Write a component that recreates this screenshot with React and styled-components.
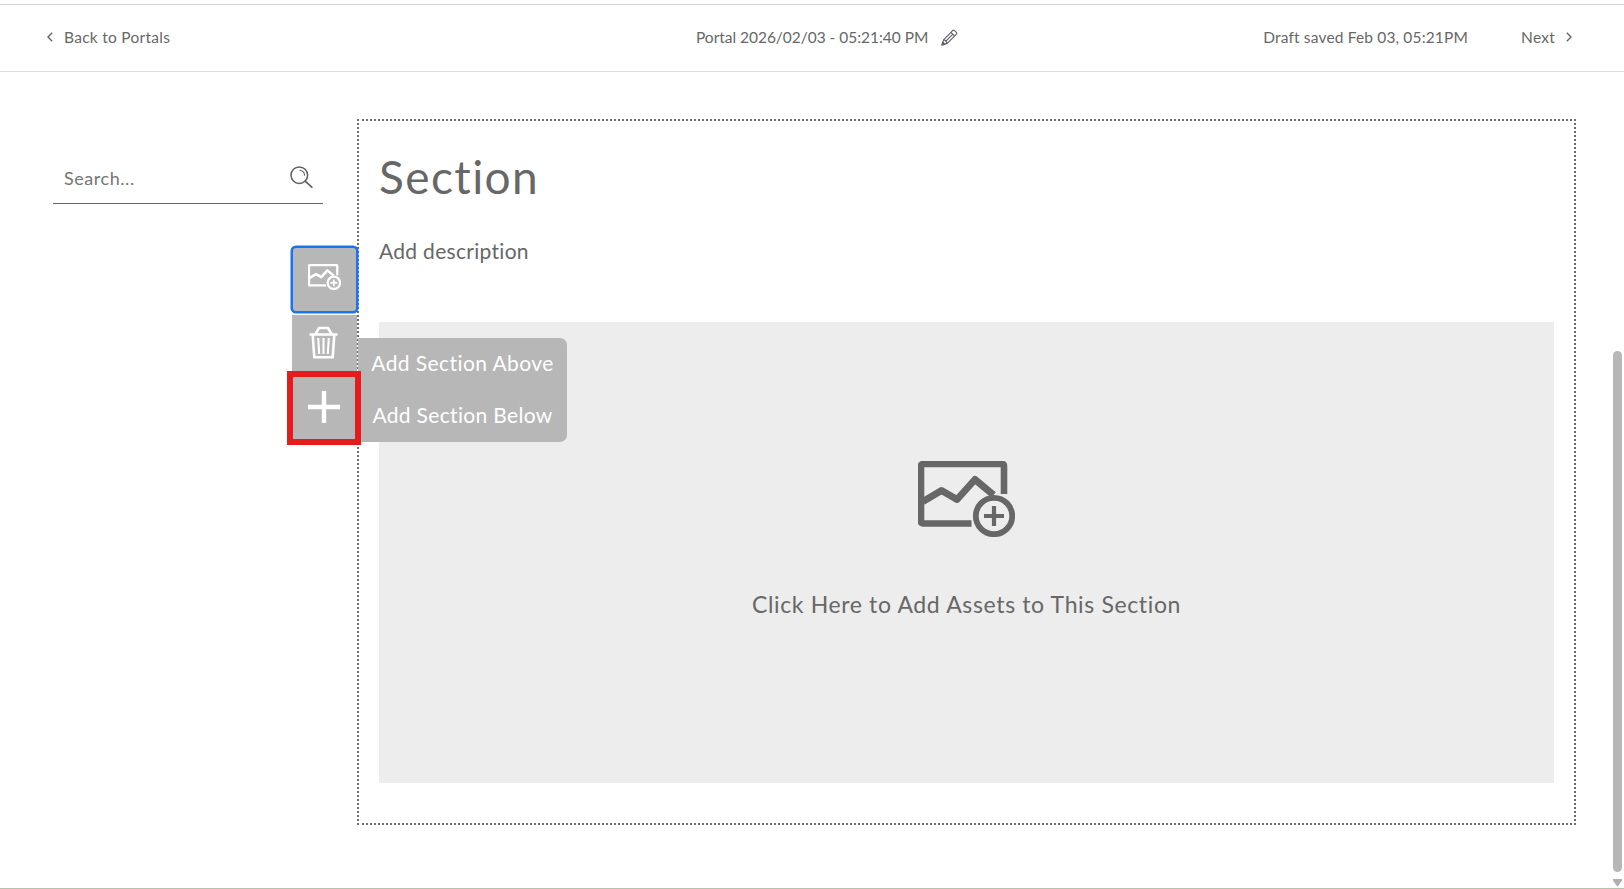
import React from "react";
import styled, { createGlobalStyle } from "styled-components";

const INK = "#676767";

const GlobalStyle = createGlobalStyle`
  *, *::before, *::after { box-sizing: border-box; }
  html, body { margin: 0; background: #fff; overflow: hidden; }
  body {
    font-family: Lato, "Liberation Sans", sans-serif;
    font-variant-ligatures: none;
    color: ${INK};
  }
  button { font: inherit; font-variant-ligatures: none; color: inherit; border: 0; background: none; padding: 0; }
  svg { display: block; flex: none; }
`;

const Page = styled.div`
  width: 100%;
  height: 889px;
  padding-top: 4px;
  display: flex;
  flex-direction: column;
  border-bottom: 1px solid #b3c4a8;
`;

const Text = styled.span`
  font-size: ${(p) => p.$size}px;
  line-height: ${(p) => p.$line || 20}px;
  letter-spacing: ${(p) => p.$track || 0}px;
  white-space: nowrap;
`;

const Header = styled.header`
  flex: none;
  height: 68px;
  padding: 0 52px 2px 47px;
  display: grid;
  grid-template-columns: 649px 1fr auto;
  align-items: center;
  border-top: 1px solid #d0d0d0;
  border-bottom: 1px solid #dfdfdf;
`;

const BackLink = styled.button`
  display: flex;
  align-items: center;
  gap: 11px;
`;

const PortalTitle = styled.div`
  display: flex;
  align-items: center;
  gap: 13px;
`;

const HeaderActions = styled.div`
  display: flex;
  align-items: center;
  gap: 53px;
`;

const NextButton = styled.button`
  display: flex;
  align-items: center;
  gap: 11px;
`;

const Main = styled.main`
  flex: 1;
  display: flex;
  min-height: 0;
`;

const Sidebar = styled.aside`
  width: 357px;
  flex: none;
  padding: 85px 34px 0 53px;
`;

const SearchField = styled.label`
  height: 47px;
  padding: 0 10px 5px 11px;
  display: flex;
  align-items: center;
  justify-content: space-between;
  border-bottom: 1px solid ${INK};
`;

const SearchInput = styled(Text)`
  color: #757575;
  padding-top: 1px;
`;

const SectionCard = styled.section`
  position: relative;
  width: 1219px;
  height: 706px;
  flex: none;
  margin-top: 47px;
  padding: 28px 20px 0;
  border: 2px dotted #6b6b6b;
  display: flex;
  flex-direction: column;
`;

const SectionTitle = styled(Text).attrs({ as: "h1" })`
  margin: 0;
  font-weight: 400;
`;

const Description = styled(Text).attrs({ as: "p" })`
  margin: 33px 0 58px;
`;

const DropZone = styled.button`
  height: 461px;
  background: #ededed;
  display: flex;
  flex-direction: column;
  align-items: center;
  padding-top: 139px;
  gap: 53px;
`;

const Toolbar = styled.div`
  position: absolute;
  left: -68px;
  top: 125px;
  width: 67px;
  display: flex;
  flex-direction: column;
  align-items: center;
`;

const Tool = styled.button`
  width: 65px;
  height: 56px;
  background: #b7b7b7;
  color: #fff;
  display: flex;
  align-items: center;
  justify-content: center;
`;

const FocusedTool = styled(Tool)`
  width: 67px;
  height: 67px;
  margin-bottom: 2px;
  padding: 0 1px 5px 0;
  border: 2px solid #1a73f0;
  border-radius: 5px;
  box-shadow: 0 0 0 0.5px #1a73f0;
`;

const TrashTool = styled(Tool)`
  padding: 0 2px 1px 0;
`;

const HighlightedTool = styled(Tool)`
  width: 74px;
  height: 74px;
  margin-left: -1px;
  padding-bottom: 3px;
  border: 6px solid #e61b1b;
  position: relative;
  z-index: 2;
`;

const AddMenu = styled.div`
  position: absolute;
  left: -1px;
  top: 217px;
  width: 209px;
  height: 104px;
  padding-bottom: 1px;
  border-radius: 0 7px 7px 0;
  background: #b7b7b7;
  color: #fff;
  display: grid;
  grid-template-rows: 52px 52px;
  place-items: center;
  align-content: end;
`;

const ScrollTrack = styled.div`
  margin-left: auto;
  width: 11px;
  padding: 279px 2px 2px 0;
  display: flex;
  flex-direction: column;
  gap: 7px;
`;

const ScrollThumb = styled.div`
  height: 521px;
  border-radius: 5px;
  background: #b7b7b7;
`;

const Chevron = ({ right }) => (
  <svg width="6" height="10" viewBox="0 0 6 10" fill="none" stroke={INK} strokeWidth="1.4">
    <path d={right ? "M.8.8 5 5 .8 9.2" : "M5.2.8 1 5l4.2 4.2"} />
  </svg>
);

const Pencil = () => (
  <svg width="17" height="17" viewBox="0 0 17 17" fill="none" stroke="#5f5f6b" strokeWidth="1.1" strokeLinejoin="round">
    <path d="M1 16l1.6-5.2L11.6 1.6q1-1 2 0l1.7 1.7q1 1 0 2L6.2 14.4z" />
    <path d="M2.6 10.8q2.8.6 3.6 3.6M9.9 3.3l3.7 3.7M4.4 12.6l7.2-7.2" />
    <path d="M1 16l.8-2.8 2 2z" fill="#5f5f6b" />
  </svg>
);

const Magnifier = () => (
  <svg width="23" height="23" viewBox="0 0 23 23" fill="none" stroke="#5f5f66" strokeWidth="1.5" strokeLinecap="round">
    <circle cx="9.3" cy="9.2" r="8.3" />
    <path d="M10 4.2q4.3.7 4.6 5" strokeWidth="1.1" />
    <path d="M15.2 15.2l6.6 6" strokeWidth="1.7" />
  </svg>
);

const AddImage = ({ width, height, bold }) => (
  <svg width={width} height={height} viewBox="0 0 97 76" fill="none" stroke="currentColor">
    <path
      d="M53.5 62.5H5q-2 0-2-2V5q0-2 2-2h79q2 0 2 2v28"
      strokeWidth="6.6"
    />
    <path
      d="M5 40.5L23.5 29.5 39 38.5 57 18.5 75.5 34"
      strokeWidth={bold ? 7.5 : 7}
      strokeLinejoin="round"
    />
    <circle cx="76" cy="55" r="18.2" strokeWidth={bold ? 6.5 : 5.8} />
    <path d="M76 45v20M66 55h20" strokeWidth={bold ? 5.5 : 4.2} />
  </svg>
);

const Trash = () => (
  <svg width="29" height="33" viewBox="0 0 29 33" fill="none" stroke="#fff" strokeWidth="2.6">
    <path d="M.5 8.5h28M6.5 8L10 2h9l3.5 6M3.7 9l1.6 22.2h18.4L25.3 9" />
    <path d="M9.2 12l1 16M14.5 12v16M19.8 12l-1 16" strokeWidth="2.1" />
  </svg>
);

const Plus = () => (
  <svg width="32" height="32" viewBox="0 0 32 32" stroke="#fff" strokeWidth="4.4">
    <path d="M16 0v32M0 16h32" />
  </svg>
);

const ScrollArrow = () => (
  <svg width="9" height="7" viewBox="0 0 9 7" fill="#b0b0b0">
    <path d="M0 0h9v1.5L5.2 7H3.8L0 1.5z" />
  </svg>
);

export default function App() {
  return (
    <>
      <GlobalStyle />
      <Page>
        <Header>
          <BackLink>
            <Chevron />
            <Text $size={15.5} $track={0.27}>Back to Portals</Text>
          </BackLink>
          <PortalTitle>
            <Text $size={15.5} $track={-0.03}>Portal 2026/02/03 - 05:21:40 PM</Text>
            <Pencil />
          </PortalTitle>
          <HeaderActions>
            <Text $size={15.5} $track={0.16}>Draft saved Feb 03, 05:21PM</Text>
            <NextButton>
              <Text $size={15.5} $track={0.25}>Next</Text>
              <Chevron right />
            </NextButton>
          </HeaderActions>
        </Header>
        <Main>
          <Sidebar>
            <SearchField>
              <SearchInput $size={18} $track={0.55}>Search...</SearchInput>
              <Magnifier />
            </SearchField>
          </Sidebar>
          <SectionCard>
            <SectionTitle $size={46} $line={56} $track={1.4}>Section</SectionTitle>
            <Description $size={21} $line={26} $track={0.3}>Add description</Description>
            <DropZone>
              <AddImage width={97} height={76} />
              <Text $size={23} $line={28} $track={0.64}>Click Here to Add Assets to This Section</Text>
            </DropZone>
            <Toolbar>
              <FocusedTool><AddImage width={33} height={26} bold /></FocusedTool>
              <TrashTool><Trash /></TrashTool>
              <HighlightedTool><Plus /></HighlightedTool>
            </Toolbar>
            <AddMenu>
              <Text $size={21} $line={24} $track={0.42}>Add Section Above</Text>
              <Text $size={21} $line={24} $track={0.33}>Add Section Below</Text>
            </AddMenu>
          </SectionCard>
          <ScrollTrack>
            <ScrollThumb />
            <ScrollArrow />
          </ScrollTrack>
        </Main>
      </Page>
    </>
  );
}
